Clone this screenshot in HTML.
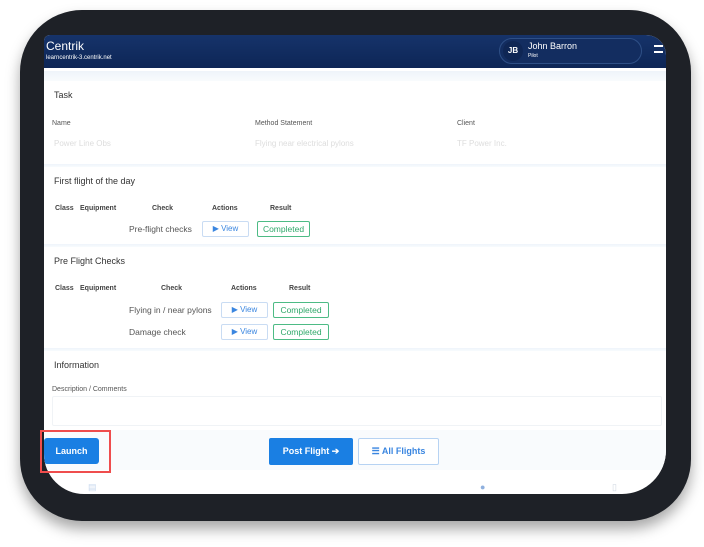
<!DOCTYPE html>
<html><head><style>
*{margin:0;padding:0;box-sizing:border-box}
body{width:704px;height:547px;background:#fff;position:relative;overflow:hidden;font-family:"Liberation Sans",sans-serif}
.frame{position:absolute;left:20px;top:10px;width:671px;height:511px;background:#1e2127;border-radius:62px;box-shadow:0 8px 14px rgba(0,0,0,.35)}
.screen{position:absolute;left:44px;top:35px;width:622px;height:459px;background:#fff;border-radius:6px 20px 44px 40px;overflow:hidden}
.hdr{position:absolute;left:0;top:0;width:100%;height:33px;background:linear-gradient(#16336a,#0d2656)}
.a{position:absolute;white-space:nowrap}
.sec{font-size:9px;color:#333}
.lbl{font-size:7px;color:#555}
.th{font-size:7px;color:#444;font-weight:bold}
.td{font-size:8.5px;color:#555}
.view{position:absolute;height:16px;border:1px solid #c9dcf3;border-radius:2px;font-size:8px;color:#3a86e0;text-align:center;line-height:14px}
.comp{position:absolute;height:16px;border:1px solid #4dbb85;border-radius:2px;font-size:8.5px;color:#2fa86a;text-align:center;line-height:14px}
.hr{position:absolute;left:0;width:100%;height:3px;background:linear-gradient(#eef4fa,#f8fbfd)}
</style></head><body>
<div class="frame"></div>
<div class="screen">
 <div class="hdr">
  <div class="a" style="left:2px;top:4px;color:#fff;font-size:12px">Centrik</div>
  <div class="a" style="left:2px;top:20px;color:#fff;font-size:6px">learncentrik-3.centrik.net</div>
  <div class="a" style="left:455px;top:3px;width:143px;height:26px;border:1px solid #2e4f86;border-radius:13px;background:#132d60"></div>
  <div class="a" style="left:459px;top:6px;width:20px;height:20px;border-radius:10px;background:#0f2654;color:#fff;font-size:8px;font-weight:bold;text-align:center;line-height:20px">JB</div>
  <div class="a" style="left:484px;top:6px;color:#fff;font-size:9px">John Barron</div>
  <div class="a" style="left:484px;top:18px;color:#fff;font-size:5px">Pilot</div>
  <div class="a" style="left:610px;top:10px;width:9px;height:8px;border-top:2px solid #fff;border-bottom:2px solid #fff"></div>
 </div>
 <div class="hr" style="top:36px;height:10px"></div>
 <div class="a sec" style="left:10px;top:55px">Task</div>
 <div class="a lbl" style="left:8px;top:85px">Name</div>
 <div class="a lbl" style="left:211px;top:85px">Method Statement</div>
 <div class="a lbl" style="left:413px;top:85px">Client</div>
 <div class="a" style="left:10px;top:104px;font-size:8px;color:#ddd">Power Line Obs</div>
 <div class="a" style="left:211px;top:104px;font-size:8px;color:#ddd">Flying near electrical pylons</div>
 <div class="a" style="left:413px;top:104px;font-size:8px;color:#ddd">TF Power Inc.</div>
 <div class="hr" style="top:129px"></div>
 <div class="a sec" style="left:10px;top:141px">First flight of the day</div>
 <div class="a th" style="left:11px;top:170px">Class</div>
 <div class="a th" style="left:36px;top:170px">Equipment</div>
 <div class="a th" style="left:108px;top:170px">Check</div>
 <div class="a th" style="left:168px;top:170px">Actions</div>
 <div class="a th" style="left:226px;top:170px">Result</div>
 <div class="a td" style="left:85px;top:189px">Pre-flight checks</div>
 <div class="view" style="left:158px;top:186px;width:47px">▶ View</div>
 <div class="comp" style="left:213px;top:186px;width:53px">Completed</div>
 <div class="hr" style="top:209px"></div>
 <div class="a sec" style="left:10px;top:221px">Pre Flight Checks</div>
 <div class="a th" style="left:11px;top:250px">Class</div>
 <div class="a th" style="left:36px;top:250px">Equipment</div>
 <div class="a th" style="left:117px;top:250px">Check</div>
 <div class="a th" style="left:187px;top:250px">Actions</div>
 <div class="a th" style="left:245px;top:250px">Result</div>
 <div class="a td" style="left:85px;top:270px">Flying in / near pylons</div>
 <div class="view" style="left:177px;top:267px;width:47px">▶ View</div>
 <div class="comp" style="left:229px;top:267px;width:56px">Completed</div>
 <div class="a td" style="left:85px;top:292px">Damage check</div>
 <div class="view" style="left:177px;top:289px;width:47px">▶ View</div>
 <div class="comp" style="left:229px;top:289px;width:56px">Completed</div>
 <div class="hr" style="top:313px"></div>
 <div class="a sec" style="left:10px;top:325px">Information</div>
 <div class="a lbl" style="left:8px;top:351px">Description / Comments</div>
 <div class="a" style="left:8px;top:361px;width:610px;height:30px;border:1px solid #f0f3f6;border-radius:2px"></div>
 <div class="a" style="left:0;top:395px;width:100%;height:40px;background:#f9fbfd"></div>
 <div class="a" style="left:0;top:403px;width:55px;height:26px;background:#1a7fe3;border-radius:3px;color:#fff;font-size:9px;font-weight:bold;line-height:26px;text-align:center">Launch</div>
 <div class="a" style="left:225px;top:403px;width:84px;height:27px;background:#1a7fe3;border-radius:2px;color:#fff;font-size:9px;font-weight:bold;line-height:27px;text-align:center">Post Flight ➔</div>
 <div class="a" style="left:314px;top:403px;width:81px;height:27px;background:#fff;border:1px solid #b7d3f3;border-radius:2px;color:#3a86e0;font-size:9px;font-weight:bold;line-height:25px;text-align:center">☰ All Flights</div>
 <div class="a" style="left:44px;top:447px;font-size:9px;color:#c8d8ee">▤</div>
 <div class="a" style="left:436px;top:447px;font-size:9px;color:#8fb0de">●</div>
 <div class="a" style="left:568px;top:447px;font-size:9px;color:#d0d8e2">▯</div>
</div>
<div class="a" style="left:40px;top:430px;width:71px;height:43px;border:2px solid #ef4d4d"></div>
</body></html>
